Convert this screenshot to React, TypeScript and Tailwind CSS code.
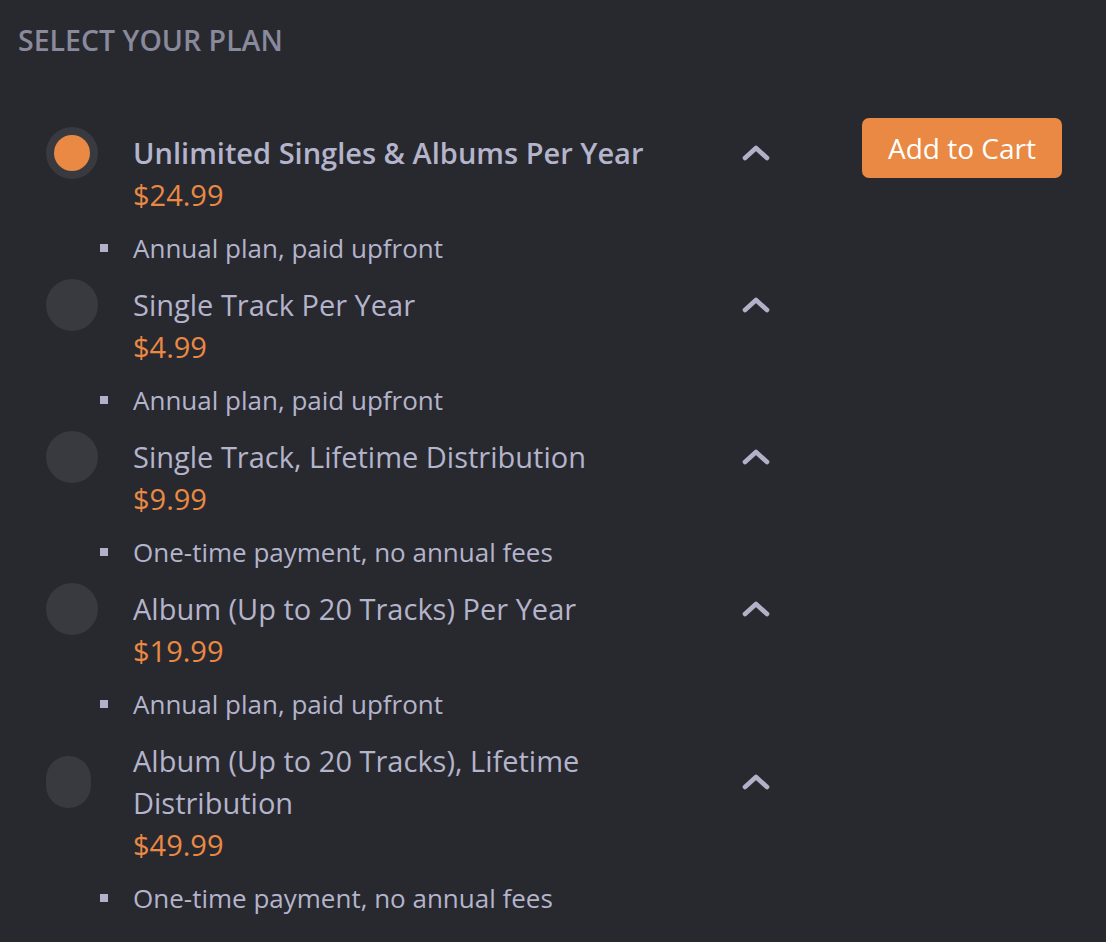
import React from 'react'

interface Plan {
  title: string
  price: string
  note: string
  selected?: boolean
  squeeze?: boolean
}

const plans: Plan[] = [
  { title: 'Unlimited Singles & Albums Per Year', price: '$24.99', note: 'Annual plan, paid upfront', selected: true },
  { title: 'Single Track Per Year', price: '$4.99', note: 'Annual plan, paid upfront' },
  { title: 'Single Track, Lifetime Distribution', price: '$9.99', note: 'One-time payment, no annual fees' },
  { title: 'Album (Up to 20 Tracks) Per Year', price: '$19.99', note: 'Annual plan, paid upfront' },
  { title: 'Album (Up to 20 Tracks), Lifetime Distribution', price: '$49.99', note: 'One-time payment, no annual fees', squeeze: true },
]

function Chevron() {
  return (
    <svg width="28" height="18" viewBox="0 0 28 18" className="shrink-0">
      <polyline points="3,14 14,4 25,14" fill="none" stroke="#b1b1c9" strokeWidth="4.6" strokeLinecap="round" strokeLinejoin="round" />
    </svg>
  )
}

function Radio({ selected, squeeze }: { selected?: boolean; squeeze?: boolean }) {
  return (
    <div className="w-[52px] h-[42px] shrink-0 flex items-center">
      <div className={`${squeeze ? 'w-[45px]' : 'w-[52px]'} h-[52px] shrink-0 rounded-full bg-[#393a40] flex items-center justify-center`}>
        {selected && <div className="w-[36px] h-[36px] rounded-full bg-[#e98944]" />}
      </div>
    </div>
  )
}

function PlanRow({ plan }: { plan: Plan }) {
  return (
    <div className="flex flex-col">
      <div className="flex items-center">
        <div className="ml-[28px]">
          <Radio selected={plan.selected} squeeze={plan.squeeze} />
        </div>
        <div className={`ml-[35px] w-[560px] text-[29px] leading-[42px] text-[#b4b4cb] ${plan.selected ? 'font-semibold' : 'font-normal'}`}>
          {plan.title}
        </div>
        <div className="ml-[49px]">
          <Chevron />
        </div>
      </div>
      <div className="ml-[115px] text-[29px] leading-[42px] text-[#e98944] font-medium">{plan.price}</div>
      <div className="mt-[11px] flex items-center h-[42px]">
        <div className="ml-[82px] w-[8px] h-[8px] bg-[#b1b1c9]" />
        <div className="ml-[25px] text-[26px] text-[#b4b4cb]">{plan.note}</div>
      </div>
    </div>
  )
}

export default function App() {
  return (
    <div className="w-[1106px] h-[942px] bg-[#28282f] overflow-hidden" style={{ fontFamily: '"Open Sans", "Noto Sans", sans-serif' }}>
      <div className="pt-[25px] pl-[18px] text-[28.5px] leading-[30px] font-semibold text-[#898a9b]">
        SELECT YOUR PLAN
      </div>
      <div className="flex justify-between pl-[18px] pr-[44px] mt-[63px]">
        <div className="flex flex-col gap-[15px] pt-[14px]">
          {plans.map((p) => (
            <PlanRow key={p.title} plan={p} />
          ))}
        </div>
        <div>
          <button className="h-[60px] w-[200px] rounded-[7px] bg-[#e98944] text-white text-[28px] leading-none">
            Add to Cart
          </button>
        </div>
      </div>
    </div>
  )
}
